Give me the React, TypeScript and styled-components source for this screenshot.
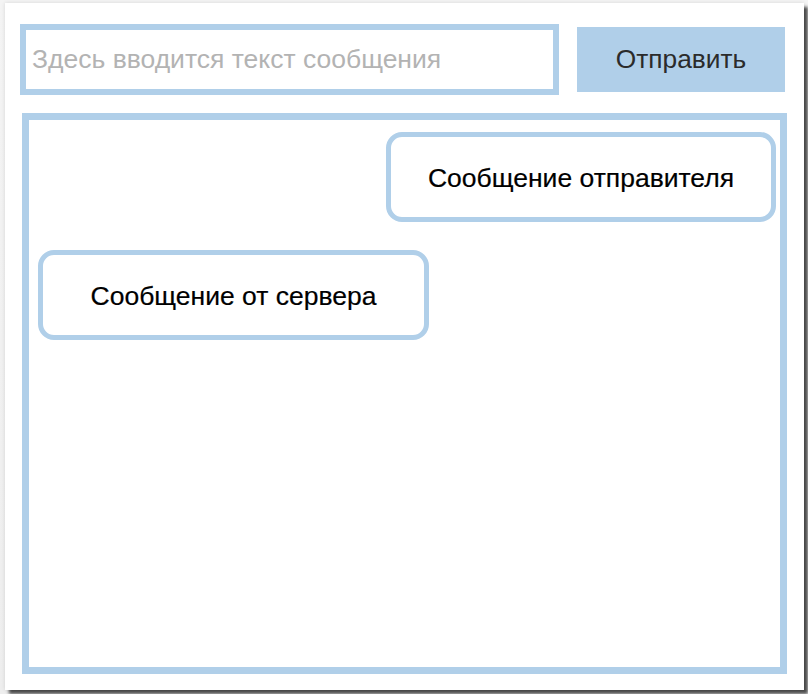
import React from "react";
import styled, { createGlobalStyle } from "styled-components";

const Global = createGlobalStyle`
  html, body { margin: 0; padding: 0; background: #ffffff; }
  body { font-family: "Liberation Sans", Arial, sans-serif; }
`;

const BLUE = "#b0cfe9";

const Page = styled.div`
  width: 808px;
  height: 694px;
  padding: 3px 0 0 5px;
  box-sizing: border-box;
  background: linear-gradient(#f4f4f4, #eeeeee);
`;

const Card = styled.div`
  width: 799px;
  height: 687px;
  box-sizing: border-box;
  background: #ffffff;
  box-shadow: 4px 4px 3px rgba(0, 0, 0, 0.68), 0 0 4px rgba(0, 0, 0, 0.12);
  padding: 21px 15px 0 15px;
  display: flex;
  flex-direction: column;
  gap: 18px;
`;

const Toolbar = styled.div`
  display: flex;
  align-items: center;
  gap: 18px;
  width: 765px;
`;

const MessageInput = styled.input`
  width: 539px;
  height: 71px;
  box-sizing: border-box;
  border: 6px solid ${BLUE};
  outline: none;
  padding: 0 0 0 6px;
  font-family: "Liberation Sans", Arial, sans-serif;
  font-size: 26.5px;
  color: #333;
  &::placeholder { color: #b3b3b3; }
`;

const SendButton = styled.button`
  width: 208px;
  height: 65px;
  border: none;
  background: ${BLUE};
  font-family: "Liberation Sans", Arial, sans-serif;
  font-size: 26.3px;
  color: #2b2b2b;
  padding: 0;
`;

const ChatArea = styled.div`
  width: 765px;
  height: 561px;
  margin-left: 2px;
  box-sizing: border-box;
  border: 7px solid ${BLUE};
  padding: 12px 4px 0 9px;
  display: flex;
  flex-direction: column;
  gap: 28px;
`;

const Bubble = styled.div<{ $own?: boolean }>`
  align-self: ${(p) => (p.$own ? "flex-end" : "flex-start")};
  width: ${(p) => (p.$own ? 390 : 391)}px;
  height: 90px;
  box-sizing: border-box;
  border: 5px solid ${BLUE};
  border-radius: 16px;
  display: flex;
  align-items: center;
  justify-content: center;
  padding-top: 3px;
  font-size: 26.5px;
  color: #000;
  -webkit-text-stroke: 0.2px #000;
`;

export default function App() {
  return (
    <>
      <Global />
      <Page>
        <Card>
          <Toolbar>
            <MessageInput placeholder="Здесь вводится текст сообщения" />
            <SendButton>Отправить</SendButton>
          </Toolbar>
          <ChatArea>
            <Bubble $own>Сообщение отправителя</Bubble>
            <Bubble>Сообщение от сервера</Bubble>
          </ChatArea>
        </Card>
      </Page>
    </>
  );
}
